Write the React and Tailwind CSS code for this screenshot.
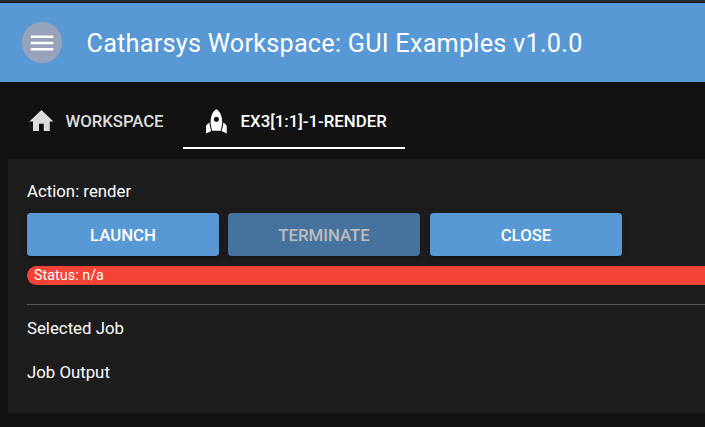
function MenuIcon() {
  return (
    <svg viewBox="0 0 24 24" className="size-[30px] fill-white">
      <path d="M3 18h18v-2H3v2zm0-5h18v-2H3v2zm0-7v2h18V6H3z" />
    </svg>
  );
}

function HomeIcon() {
  return (
    <svg viewBox="0 0 24 24" className="mb-[1px] size-[28.8px] shrink-0 fill-current">
      <path d="M10 20v-6h4v6h5v-8h3L12 2.6 2 12h3v8z" />
    </svg>
  );
}

function RocketIcon() {
  return (
    <svg viewBox="0 0 24 24" className="mb-[1px] size-[28.8px] shrink-0 fill-current">
      <path
        fillRule="evenodd"
        d="M12 1.8C9 3.3 7.2 7.3 7.2 12.2c0 2.6.6 5.3 1.3 7.6h7c.7-2.3 1.3-5 1.3-7.6C16.8 7.3 15 3.3 12 1.8zM12 8.200a2.100 2.100 0 1 1 0 4.200 2.100 2.100 0 0 1 0-4.200z"
      />
      <path d="M6.300 12.900L4.400 14.300c-.7.5-1 1.200-1 2V22l4.300-2C6.900 17.800 6.300 15.300 6.300 12.900zM17.700 12.900l1.900 1.400c.7.5 1 1.200 1 2V22l-4.300-2c.8-2.200 1.400-4.700 1.400-7.100z" />
    </svg>
  );
}

function Button({ children, disabled = false }) {
  return (
    <button
      disabled={disabled}
      className="h-[43px] w-[192px] shrink-0 rounded-[3.6px] bg-[#5898d4] pt-[2px] font-medium text-white shadow-[0_1px_6px_rgba(0,0,0,0.2),0_2px_2px_rgba(0,0,0,0.14),0_3px_1px_-2px_rgba(0,0,0,0.12)] disabled:mr-px disabled:opacity-70"
    >
      {children}
    </button>
  );
}

export default function App() {
  return (
    <div className="flex h-[427px] w-full flex-col overflow-hidden bg-[#121212] font-['Roboto',sans-serif] text-[16.8px] leading-[25px] text-white">
      <div className="h-[3px] shrink-0 border-b border-[#121212] bg-[#2b2a33]" />
      <header className="flex h-[79px] shrink-0 items-center gap-[24.5px] bg-[#5898d4] pl-[22px]">
        <button className="flex h-[41px] w-[40px] items-center justify-center rounded-full bg-[#96a3bb]">
          <MenuIcon />
        </button>
        <h1 className="pt-[2px] text-[25.2px] tracking-[0.252px] whitespace-nowrap">
          Catharsys Workspace: GUI Examples v1.0.0
        </h1>
      </header>
      <nav className="mt-[10px] flex h-[57px] shrink-0 pl-[8px] font-medium">
        <div className="flex w-[175px] items-center gap-[9.6px] pt-[2px] pl-[19.2px] text-[#dcdcdc]">
          <HomeIcon />
          <span className="tracking-[-0.07px]">WORKSPACE</span>
        </div>
        <div className="flex w-[222px] items-center gap-[9.6px] border-b-2 border-white pt-[4px] pl-[19.2px]">
          <RocketIcon />
          <span>EX3[1:1]-1-RENDER</span>
        </div>
      </nav>
      <main className="mt-[10px] ml-[8px] flex h-[254px] shrink-0 flex-col bg-[#1d1d1d] pt-[20px] pl-[19px]">
        <p>Action: render</p>
        <div className="mt-[9px] flex gap-[9px]">
          <Button>LAUNCH</Button>
          <Button disabled>TERMINATE</Button>
          <Button>CLOSE</Button>
        </div>
        <div className="mt-[10px] h-[19px] rounded-l-full bg-[#f44336] pl-[7px] text-[14.4px] leading-[19px]">
          Status: n/a
        </div>
        <hr className="mt-[19px] border-[#5b5b5b]" />
        <p className="mt-[11px]">Selected Job</p>
        <p className="mt-[19px]">Job Output</p>
      </main>
    </div>
  );
}
